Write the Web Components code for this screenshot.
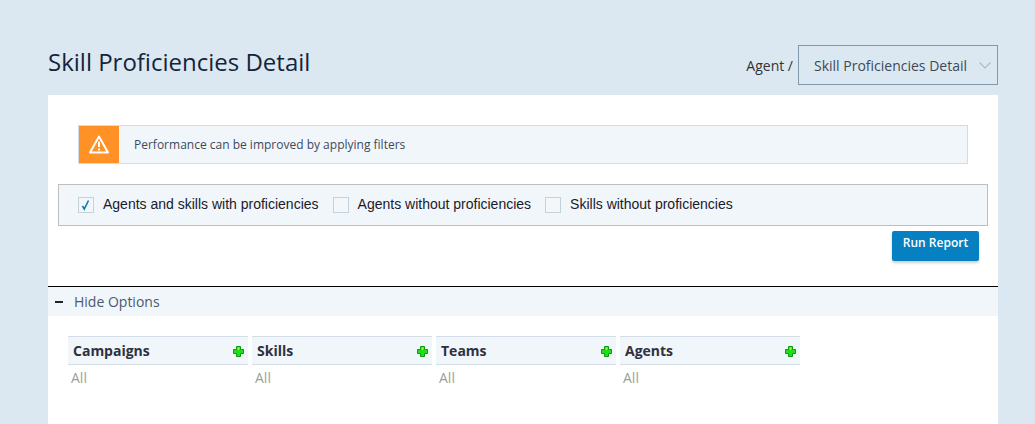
<!DOCTYPE html>
<html><head><meta charset="utf-8"><title>Skill Proficiencies Detail</title>
<style>
html,body{margin:0;height:100%;overflow:hidden}
body{background:#dce8f1;font-family:"Open Sans",sans-serif;color:#333}
</style></head><body>
<report-page></report-page>
<template id="t-page">
<style>
:host{display:block;height:424px;padding:0 37px 0 48px;box-sizing:border-box}
header{display:flex;justify-content:space-between;align-items:flex-start;height:95px;box-sizing:border-box;padding-top:45px}
h1{margin:0;font:400 24px/34px "Open Sans",sans-serif;color:#14243c}
.crumb{display:flex;align-items:center;gap:5px;font-size:14px;color:#333}
.card{background:#fff;height:329px;display:flex;flex-direction:column}
.top{padding:30px 30px 20px 30px}
.run{display:flex;justify-content:flex-end;padding:5px 19px 0 0;height:60px;box-sizing:border-box}
.filters{display:flex;gap:4px;padding:20px 20px 0}
</style>
<header><h1>Skill Proficiencies Detail</h1>
<div class="crumb"><span>Agent /</span><view-select>Skill Proficiencies Detail</view-select></div></header>
<div class="card">
<div class="top"><alert-bar>Performance can be improved by applying filters</alert-bar></div>
<check-panel></check-panel>
<div class="run"><run-button>Run Report</run-button></div>
<options-bar>Hide Options</options-bar>
<div class="filters">
<filter-col>Campaigns</filter-col><filter-col>Skills</filter-col><filter-col>Teams</filter-col><filter-col>Agents</filter-col>
</div></div>
</template>
<template id="t-select">
<style>
:host{display:flex;align-items:center;justify-content:space-between;box-sizing:border-box;width:200px;height:40px;border:1px solid #7e98ac;padding:0 6px 0 15px;font-size:14px;color:#3c4a58}
svg{display:block}
</style><slot></slot>
<svg width="12" height="7" viewBox="0 0 12 7"><path d="M.5.5L6 6l5.500-5.500" fill="none" stroke="#a9bcc8" stroke-width="1.200"/></svg>
</template>
<template id="t-alert">
<style>
:host{display:flex;align-items:center;box-sizing:border-box;height:39px;border:1px solid #d2dce8;background:#f1f6fa;font-size:12px;color:#3d4a5c}
.ic{width:40px;align-self:stretch;background:#ff9126;display:flex;align-items:center;justify-content:center;margin-right:15px}
</style>
<div class="ic"><svg width="20" height="19" viewBox="0 0 20 19"><path d="M10 1.500 L19 17.500 H1 Z" fill="none" stroke="#fff" stroke-width="2" stroke-linejoin="round"/><path d="M10 6.500v5.500" stroke="#fff" stroke-width="2"/><path d="M10 13.500v2" stroke="#fff" stroke-width="2"/></svg></div><slot></slot>
</template>
<template id="t-panel">
<style>
:host{display:flex;align-items:center;box-sizing:border-box;margin:0 10px;height:42px;border:1px solid #bcbfc2;background:#f1f6fa;padding:0 19px 2px;gap:14px;font:14px "Liberation Sans",Arial,sans-serif;color:#1a1a2a}
</style>
<check-item checked>Agents and skills with proficiencies</check-item><check-item>Agents without proficiencies</check-item><check-item>Skills without proficiencies</check-item>
</template>
<template id="t-check">
<style>
:host{display:flex;align-items:center;gap:9px}
.b{width:16px;height:16px;box-sizing:border-box;border:1px solid #c3d3de;background:#f4f7fa;display:block;margin-top:2px}
svg{display:block}
</style><span class="b"></span><slot></slot>
</template>
<template id="t-run">
<style>
:host{display:flex;justify-content:center;box-sizing:border-box;width:87px;height:30px;padding-top:4px;background:#0680c0;border-radius:2px;box-shadow:0 2px 3px rgba(0,0,0,.2);color:#fff;font-size:12px;font-weight:600;line-height:16px}
</style><slot></slot>
</template>
<template id="t-options">
<style>
:host{display:flex;align-items:center;height:30px;box-sizing:border-box;border-top:1px solid #000;background:#f1f6fa;font-size:14px;color:#4a5a6e;padding-left:7px}
i{display:block;width:8px;height:2px;background:#222;margin-right:11px}
</style><i></i><slot></slot>
</template>
<template id="t-col">
<style>
:host{display:block;width:180px}
.h{display:flex;align-items:center;justify-content:space-between;box-sizing:border-box;height:29px;border-top:1px solid #d3dde8;border-bottom:1px solid #d3dde8;background:#f1f6fa;padding:0 4px 0 5px;font-size:14px;font-weight:700;color:#2c3240}
.a{font-size:14px;color:#9a9f9a;padding:3px 0 0 3px;line-height:19px}
svg{display:block;margin-top:2px}
</style>
<div class="h"><span><slot></slot></span><svg width="11" height="11" viewBox="0 0 11 11"><path d="M3.500.5h4v3h3v4h-3v3h-4v-3h-3v-4h3z" fill="#1ee01a" stroke="#0a9a14"/><path d="M4.500 1.500h2v2h-2z" fill="#c8f04a"/></svg></div>
<div class="a">All</div>
</template>
<script>
function def(tag,tid,init){customElements.define(tag,class extends HTMLElement{
constructor(){super();const r=this.attachShadow({mode:'open'});r.appendChild(document.getElementById(tid).content.cloneNode(true));if(init)init(this,r);}
});}
def('view-select','t-select');def('alert-bar','t-alert');def('run-button','t-run');def('options-bar','t-options');def('filter-col','t-col');
def('check-item','t-check',(el,r)=>{if(el.hasAttribute('checked')){r.querySelector('.b').innerHTML='<svg width="14" height="14" viewBox="0 0 14 14"><path d="M3.500 8l1.800 3L9.500 2.500" fill="none" stroke="#0b78c0" stroke-width="1.600"/></svg>';}});
def('check-panel','t-panel');def('report-page','t-page');
</script>
</body></html>
